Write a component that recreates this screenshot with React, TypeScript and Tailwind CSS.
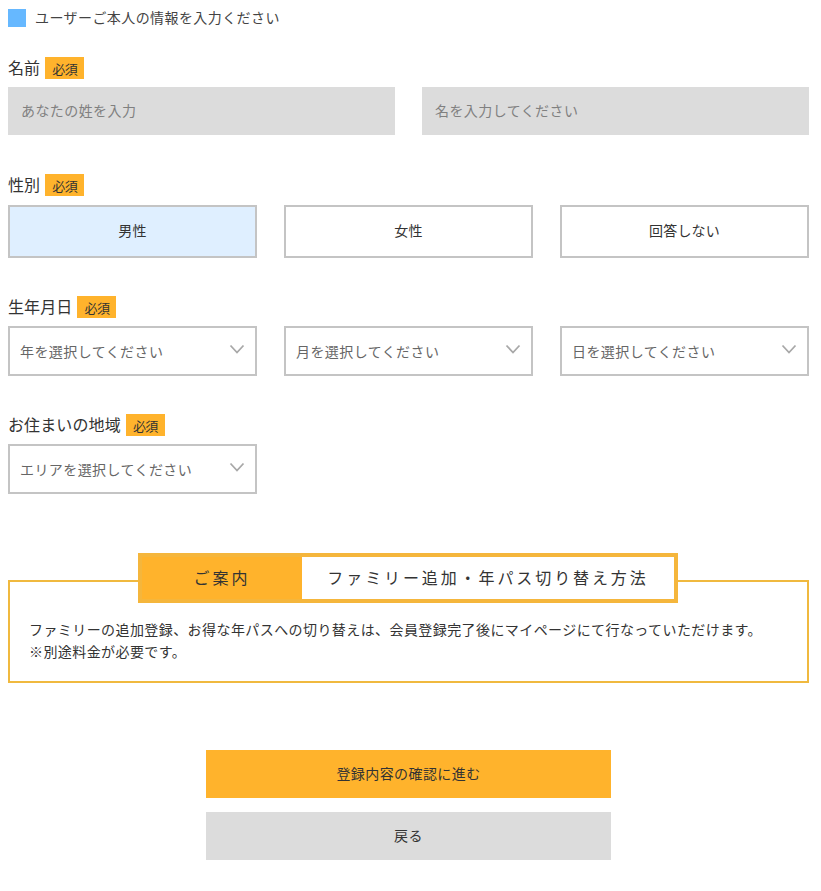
import React from "react";

const font = { fontFamily: '"Noto Sans CJK JP", "Noto Sans", sans-serif' };

function Badge() {
  return (
    <span className="ml-[5px] flex h-[22px] w-[39px] items-center justify-center bg-[#ffb32c] pt-[1px] text-[13px] leading-none tracking-[-0.6px] text-[#333]">
      必須
    </span>
  );
}

function Label({ children }: { children: string }) {
  return (
    <div className="flex h-[22px] items-center text-[16px] leading-none tracking-[0.12px] text-[#333]">
      <span className="pb-[3px]">{children}</span>
      <Badge />
    </div>
  );
}

function Select({ text }: { text: string }) {
  return (
    <div className="flex h-[50px] w-[249px] items-center justify-between border-2 border-[#c4c4c4] bg-white pl-[10px] pr-[10px]">
      <span className="pt-[1px] text-[14px] tracking-[0.42px] text-[#666]">{text}</span>
      <svg width="16" height="10" viewBox="0 0 16 10" fill="none" className="mb-[4px]">
        <path d="M1.5 1.5 L8 8.5 L14.5 1.5" stroke="#a8a8a8" strokeWidth="1.8" />
      </svg>
    </div>
  );
}

function Choice({ text, active }: { text: string; active?: boolean }) {
  return (
    <div
      className={
        active
          ? "flex h-[53px] w-[249px] items-center justify-center border-2 border-[#c4c4c4] bg-[#dfefff] pb-[2px] text-[14px] tracking-[0.2px] text-[#333]"
          : "flex h-[53px] w-[249px] items-center justify-center border-2 border-[#c4c4c4] bg-white pb-[2px] text-[14px] tracking-[0.2px] text-[#333]"
      }
    >
      {text}
    </div>
  );
}

export default function App() {
  return (
    <div style={font} className="min-h-[891px] w-[821px] bg-white pl-[8px] pr-[12px] text-[#333]">
      <div className="flex h-[18px] translate-y-[9px] items-center">
        <span className="h-[18px] w-[18px] bg-[#66b8ff]" />
        <span className="ml-[9px] pb-[2px] text-[14px] leading-none tracking-[0.42px] text-[#444]">ユーザーご本人の情報を入力ください</span>
      </div>

      <div className="pt-[39px]">
        <Label>名前</Label>
        <div className="mt-[8px] flex justify-between">
          <div className="flex h-[48px] w-[387px] items-center bg-[#dcdcdc] pb-[2px] pl-[13px] text-[14px] tracking-[0.42px] text-[#808080]">あなたの姓を入力</div>
          <div className="flex h-[48px] w-[387px] items-center bg-[#dcdcdc] pb-[2px] pl-[13px] text-[14px] tracking-[0.42px] text-[#808080]">名を入力してください</div>
        </div>
      </div>

      <div className="pt-[39px]">
        <Label>性別</Label>
        <div className="mt-[9px] flex justify-between">
          <Choice text="男性" active />
          <Choice text="女性" />
          <Choice text="回答しない" />
        </div>
      </div>

      <div className="pt-[38px]">
        <Label>生年月日</Label>
        <div className="mt-[8px] flex justify-between">
          <Select text="年を選択してください" />
          <Select text="月を選択してください" />
          <Select text="日を選択してください" />
        </div>
      </div>

      <div className="pt-[38px]">
        <Label>お住まいの地域</Label>
        <div className="mt-[8px]">
          <Select text="エリアを選択してください" />
        </div>
      </div>

      <div className="relative mt-[86px] h-[103px] border-2 border-[#f0b93f] px-[19px] pt-[36px] text-[14px] leading-[22px] tracking-[0.42px] text-[#333]">
        <div className="absolute left-[128px] top-[-29px] flex h-[50px] w-[540px] border-[4px] border-[#f5b63c] bg-white">
          <div className="flex w-[160px] items-center justify-center bg-[#ffb32c] pb-[2px] text-[16px] tracking-[3px]">ご案内</div>
          <div className="flex flex-1 items-center justify-center pb-[2px] text-[16px] tracking-[2.9px]">ファミリー追加・年パス切り替え方法</div>
        </div>
        <p>ファミリーの追加登録、お得な年パスへの切り替えは、会員登録完了後にマイページにて行なっていただけます。</p>
        <p>※別途料金が必要です。</p>
      </div>

      <div className="mt-[67px] flex flex-col items-center gap-[14px] text-[14px] tracking-[0.42px] text-[#333]">
        <div className="flex h-[48px] w-[405px] items-center justify-center bg-[#ffb32c] pb-[2px]">登録内容の確認に進む</div>
        <div className="flex h-[48px] w-[405px] items-center justify-center bg-[#dcdcdc] pb-[2px]">戻る</div>
      </div>
    </div>
  );
}
